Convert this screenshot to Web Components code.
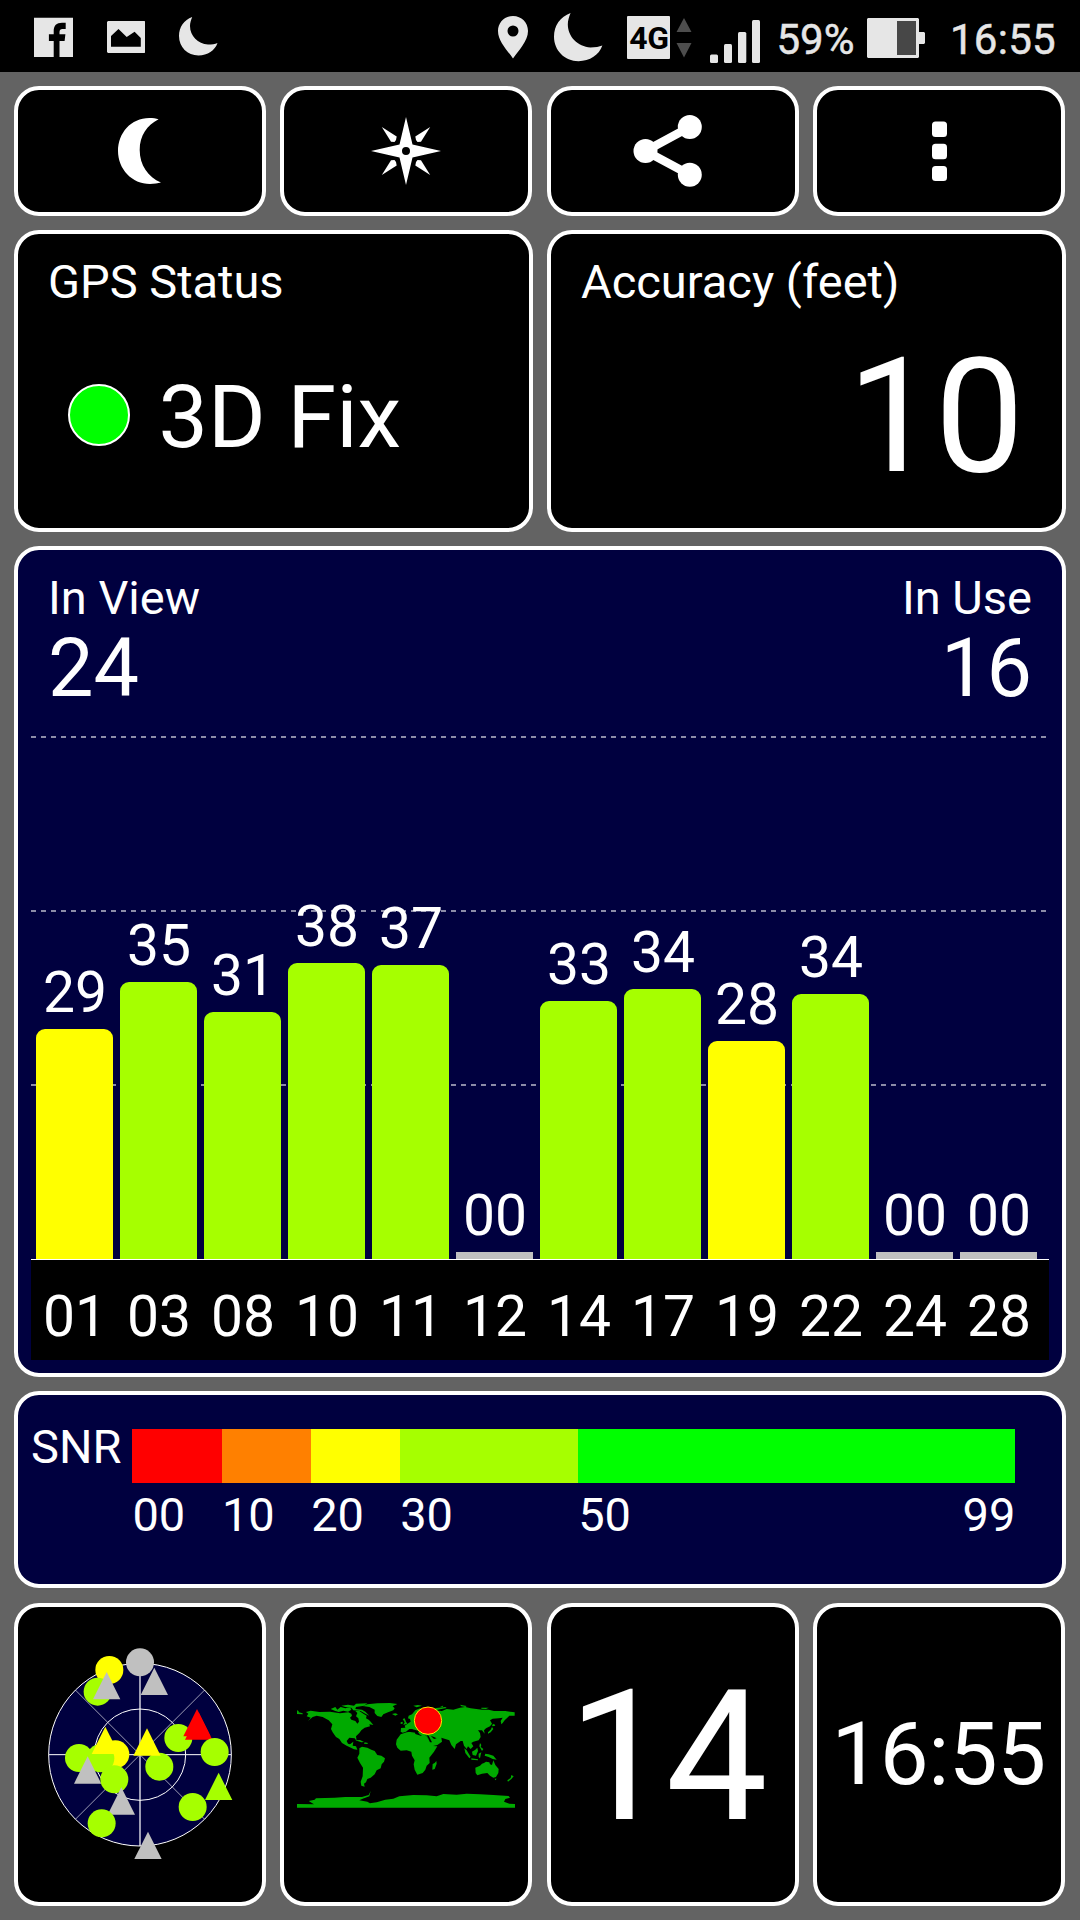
<!DOCTYPE html>
<html lang="en">
<head>
<meta charset="utf-8">
<title>GPS Test</title>
<style>
	body {
		margin: 0;
		background: #636363;
		color: #fff;
		font-family: Roboto, "Liberation Sans", sans-serif;
		line-height: 1;
	}
</style>
</head>
<body>
<gps-app></gps-app>

<script>
const LIME = "#a6ff00";
const GREY = "#c0c0c0";

// every status bar icon is drawn on the full 72px height of the bar
const MOON = "M13.2 17C5 20 0 27 0 36C0 47 8.5 55.5 19.5 55.5C28.5 55.5 36 50.5 38.5 43C36 44 33 44.5 29 44.5C19 44 11 36 11 26C11 23 12 20 13.2 17Z";
const RAY = "M24.2-24L9.3-14.5L10-11L11.5-9L15-9.3Z";

const icons = {
	facebook: [39, 72, `<path fill="#e6e6e6" d="M0 17.7H39V57H25.5V41H30.6L31.4 34.3H25.5V32C25.5 30 26.5 29 28.5 29H31.7V22.7H28C22.5 22.7 19.7 25.5 19.7 31V34.3H14.9V41H19.7V57H0Z"/>`],
	picture: [38, 72, `<path fill="#e6e6e6" fill-rule="evenodd" d="M1 21H37.5L38.5 22V52L37.5 53H1L0 52V22ZM4 36L11.5 29L19.7 37L27.6 31.7L33.8 38V46.7H4Z"/>`],
	moonSmall: [39, 72, `<path fill="#e6e6e6" d="${MOON}"/>`],
	pin: [30, 72, `<path fill="#e6e6e6" fill-rule="evenodd" d="M15 16C6.5 16 0 22.5 0 31C0 41 9 50 15 58.5C21 50 30 41 30 31C30 22.5 23.5 16 15 16ZM15 25.5a5.5 5.5 0 1 1 0 11a5.5 5.5 0 1 1 0-11Z"/>`],
	moonBig: [49, 72, `<path fill="#e6e6e6" transform="translate(0 -8.25) scale(1.256 1.25)" d="${MOON}"/>`],
	arrows: [16, 72, `<path fill="#4d4d4d" d="M8 18L15.5 32H.5ZM8 57.5L.5 43H15.5Z"/>`],
	signal: [50, 72, `<g fill="#e6e6e6"><rect y="54.5" width="8" height="8.5" rx="1.5"/><rect x="14" y="44" width="8" height="19" rx="1.5"/><rect x="28" y="32" width="8.3" height="31" rx="1.5"/><rect x="42" y="20" width="8" height="43" rx="1.5"/></g>`],
	battery: [58, 72, `<path fill="#e6e6e6" d="M1 18H51L52 19V32H57L58 33V43L57 44H52V57L51 58H1L0 57V19Z"/><rect x="30" y="21" width="19" height="34" fill="#474747"/>`],
	night: [46, 66, `<path d="M40.6 1.3C38 .3 35 0 31.3 0C13 0 0 15 0 33C0 51 14 66 32 66C36 66 40 65.5 43 64.6C30 59 21.7 47 21.7 32C21.7 18 29 7 40.6 1.3Z"/>`],
	compass: [70, 68, `<g transform="translate(35 34)">
		<path fill-rule="evenodd" d="M0-34L6.5-6.5L35 0L6.5 6.5L0 34L-6.5 6.5L-35 0L-6.5-6.5ZM0-4a4 4 0 1 0 0 8a4 4 0 1 0 0-8Z"/>
		<path d="${RAY}"/><path transform="scale(-1 1)" d="${RAY}"/><path transform="scale(1 -1)" d="${RAY}"/><path transform="scale(-1)" d="${RAY}"/>
	</g>`],
	share: [80, 74, `<g transform="translate(40 37)"><path d="M16.8-24L-27.5 0L16.8 23.7" fill="none" stroke="#fff" stroke-width="8.5"/><circle cx="-27.5" r="12"/><circle cx="16.8" cy="-24" r="12"/><circle cx="16.8" cy="23.7" r="12"/></g>`],
	more: [15, 60, `<rect y=".5" width="15" height="15.5" rx="3.5"/><rect y="22.8" width="15" height="15.5" rx="3.5"/><rect y="45" width="15" height="15" rx="3.5"/>`]
};

class AppIcon extends HTMLElement {
	connectedCallback() {
		const [w, h, body] = icons[this.getAttribute("name")];
		this.attachShadow({ mode: "open" }).innerHTML = `
			<style>
				:host { display: block; flex: none; }
				svg { display: block; fill: #fff; }
			</style>
			<svg width="${w}" height="${h}" viewBox="0 0 ${w} ${h}">${body}</svg>
		`;
	}
}

class StatusBar extends HTMLElement {
	connectedCallback() {
		this.attachShadow({ mode: "open" }).innerHTML = `
			<style>
				:host {
					display: flex;
					justify-content: space-between;
					box-sizing: border-box;
					height: 72px;
					padding: 0 24px 0 34px;
					background: #000;
					color: #e6e6e6;
					font-size: 42px;
				}
				div { display: flex; }
				.left { gap: 34px; }
				.text { padding-top: 18.6px; -webkit-text-stroke: .5px #e6e6e6; }
				.time { letter-spacing: .3px; }
				.net {
					width: 43px;
					height: 43px;
					margin: 16px 6px 0 24px;
					border-radius: 1px;
					background: #e6e6e6;
					color: #000;
					font-size: 32px;
					font-weight: 700;
					line-height: 44px;
					justify-content: center;
					letter-spacing: -.5px;
				}
			</style>
			<div class="left">
				<app-icon name="facebook"></app-icon>
				<app-icon name="picture"></app-icon>
				<app-icon name="moonSmall"></app-icon>
			</div>
			<div>
				<app-icon name="pin"></app-icon>
				<app-icon name="moonBig" style="margin-left:26px"></app-icon>
				<div class="net">4G</div>
				<app-icon name="arrows"></app-icon>
				<app-icon name="signal" style="margin:0 16px 0 18px"></app-icon>
				<span class="text">59%</span>
				<app-icon name="battery" style="margin:0 24.5px 0 13px"></app-icon>
				<span class="text time">16:55</span>
			</div>
		`;
	}
}

class GpsTile extends HTMLElement {
	connectedCallback() {
		this.attachShadow({ mode: "open" }).innerHTML = `
			<style>
				:host {
					display: block;
					box-sizing: border-box;
					min-width: 0;
					border: 4px solid #fff;
					border-radius: 25px;
					background: #000;
				}
				:host([navy]) { background: #00003f; }
				:host([center]) {
					display: flex;
					align-items: center;
					justify-content: center;
					margin: 0 1px 0 -.4px;
				}
			</style>
			<slot></slot>
		`;
	}
}

class GpsReading extends HTMLElement {
	connectedCallback() {
		this.attachShadow({ mode: "open" }).innerHTML = `
			<style>
				:host { display: block; padding: 23.5px 30px 0; }
				.title { font-size: 47px; }
			</style>
			<div class="title">${this.getAttribute("title-text")}</div>
			<slot></slot>
		`;
	}
}

class FixStatus extends HTMLElement {
	connectedCallback() {
		this.attachShadow({ mode: "open" }).innerHTML = `
			<style>
				:host {
					display: flex;
					align-items: center;
					gap: 28.5px;
					margin: 68.3px 0 0 20px;
					font-size: 88px;
				}
				.led {
					box-sizing: border-box;
					width: 62px;
					height: 62px;
					margin-top: -4px;
					border: 2px solid #fff;
					border-radius: 50%;
					background: #0f0;
				}
			</style>
			<span class="led"></span>
			<span><slot></slot></span>
		`;
	}
}

const satellites = [
	["01", "29", 230, "#ff0"],
	["03", "35", 277, LIME],
	["08", "31", 247, LIME],
	["10", "38", 296, LIME],
	["11", "37", 294, LIME],
	["12", "00", 7, GREY],
	["14", "33", 258, LIME],
	["17", "34", 270, LIME],
	["19", "28", 218, "#ff0"],
	["22", "34", 265, LIME],
	["24", "00", 7, GREY],
	["28", "00", 7, GREY]
];

class SignalChart extends HTMLElement {
	connectedCallback() {
		this.attachShadow({ mode: "open" }).innerHTML = `
			<style>
				:host { display: block; }
				header {
					display: flex;
					justify-content: space-between;
					height: 162.5px;
					padding: 23.5px 30px 0;
					font-size: 47px;
				}
				header div:last-child { text-align: right; }
				b { display: block; margin-top: 7.7px; font-size: 81px; font-weight: 400; }
				.plot {
					display: grid;
					height: 523px;
					margin: 0 13px;
					border-bottom: 1px solid #fff;
				}
				.lines, .bars { grid-area: 1 / 1; min-height: 0; }
				.lines { display: flex; flex-direction: column; gap: 172px; margin-right: 2px; }
				.lines i {
					height: 2px;
					background: repeating-linear-gradient(90deg, #8c8ca8 0 5px, transparent 5px 10px);
				}
				.bars, .axis { display: flex; gap: 7px; padding-left: 5px; }
				.bars { align-items: flex-end; }
				.bars div, .axis span { width: 77px; text-align: center; font-size: 57px; text-indent: 1px; }
				.bars i { display: block; margin-top: 8px; border-radius: 9px 9px 0 0; }
				.bars i.none { border-radius: 0; }
				.axis { height: 72px; margin: 0 13px; padding-top: 28px; background: #000; }
			</style>
			<header>
				<div>In View<b>24</b></div>
				<div>In Use<b>16</b></div>
			</header>
			<div class="plot">
				<div class="lines"><i></i><i></i><i></i></div>
				<div class="bars">
					${satellites.map(([, snr, h, color]) => `<div>${snr}<i class="${h < 10 ? "none" : ""}" style="height:${h}px;background:${color}"></i></div>`).join("")}
				</div>
			</div>
			<div class="axis">${satellites.map(([prn]) => `<span>${prn}</span>`).join("")}</div>
		`;
	}
}

class SnrLegend extends HTMLElement {
	connectedCallback() {
		this.attachShadow({ mode: "open" }).innerHTML = `
			<style>
				:host { display: flex; padding: 27.5px 0 0 13px; font-size: 47px; }
				.name { width: 101.4px; }
				.step { padding-top: 6px; }
				.step i { display: block; height: 54px; margin-bottom: 8.8px; }
				.step div { display: flex; justify-content: space-between; }
			</style>
			<span class="name">SNR</span>
			<div class="step" style="width:89.5px"><i style="background:#f00"></i>00</div>
			<div class="step" style="width:89.3px"><i style="background:#ff8000"></i>10</div>
			<div class="step" style="width:89px"><i style="background:#ff0"></i>20</div>
			<div class="step" style="width:178px"><i style="background:${LIME}"></i>30</div>
			<div class="step" style="width:437.2px"><i style="background:#0f0"></i><div><span>50</span><span>99</span></div></div>
		`;
	}
}

// c = circle (centre), t = triangle (apex), in drawing order
const sky = [
	["c", 238, 120, "#ff0"],
	["c", 203, 185, LIME],
	["c", 330, 97, GREY],
	["t", 230, 126, GREY],
	["t", 373, 113, GREY],
	["c", 445, 324, LIME],
	["t", 501, 237, "#f00"],
	["t", 506, 247, "#f00"],
	["c", 554, 366, LIME],
	["c", 388, 410, LIME],
	["c", 147, 384, LIME],
	["c", 256, 373, "#ff0"],
	["c", 211, 385, LIME],
	["t", 226, 290, "#ff0"],
	["t", 351, 295, "#ff0"],
	["t", 173, 379, GREY],
	["c", 253, 448, LIME],
	["t", 274, 472, GREY],
	["c", 488, 531, LIME],
	["t", 566, 428, LIME],
	["c", 215, 580, LIME],
	["t", 354, 605, GREY]
];

class SkyView extends HTMLElement {
	connectedCallback() {
		const marks = sky.map(([kind, x, y, color]) => kind === "c"
			? `<circle cx="${x}" cy="${y}" r="42" fill="${color}"/>`
			: `<path d="M${x} ${y}l41 82h-82z" fill="${color}"/>`).join("");

		this.attachShadow({ mode: "open" }).innerHTML = `
			<style>
				:host, svg { display: block; }
			</style>
			<svg width="220" height="240" viewBox="0 12 660 720">
				<circle cx="330" cy="374" r="274" fill="#00003f"/>
				<g fill="none" stroke="#9c9cb4" stroke-width="3">
					<path d="M136 180L524 568M524 180L136 568"/>
					<path stroke-width="6" d="M330 100V648"/>
				</g>
				<g fill="none" stroke="#fff" stroke-width="3">
					<circle cx="330" cy="374" r="274"/>
					<circle cx="330" cy="374" r="137"/>
					<path d="M56 374H604"/>
				</g>
				${marks}
			</svg>
		`;
	}
}

class WorldMap extends HTMLElement {
	connectedCallback() {
		this.attachShadow({ mode: "open" }).innerHTML = `
			<style>
				:host, svg { display: block; }
			</style>
			<svg width="220" height="110" viewBox="48 58 660 330">
				<g fill="#0a0">
					<path d="M51 92L56 94V98L68 101V104L51 103Z"/>
					<path d="M78 97L92 93L118 97L150 96L180 101L205 98L214 102L216 108L210 114L214 120L226 124L232 132L237 126L235 116L228 110L232 100L226 94L238 94L250 102L260 108L258 116L266 120L272 126L280 136L268 134L270 140L254 144L244 152L238 160L228 170L230 184L224 176L208 174L200 184L204 192L210 194L220 186L218 198L228 200L232 210L240 212L222 209L200 198L186 190L178 178L168 172L158 158L153 148L157 134L146 122L128 112L110 108L98 112L84 124L92 114L80 110L85 102Z"/>
					<path d="M152 88L166 82L172 90L182 82L196 86L210 82L214 90L204 96L190 93L176 97L164 93ZM184 78L204 75L222 78L228 72L262 71L252 78L228 82L226 88L246 90L256 96L268 108L256 102L242 94L220 92L214 84L196 82Z"/>
					<path d="M248 79L262 74L292 71L330 70L352 73L338 80L344 86L340 92L324 98L310 104L304 112L292 109L284 100L284 90L268 82Z"/>
					<path d="M336 103L346 101L354 104L346 108ZM226 182L240 181L252 187L244 188ZM254 188L264 190L262 193L252 192Z"/>
					<path d="M238 206L246 201L262 204L274 210L284 214L292 226L304 228L315 236L312 246L305 254L302 266L290 272L284 284L272 294L262 298L258 308L252 312L254 321L244 318L242 306L248 290L249 264L240 250L232 234L238 222Z"/>
					<path d="M362 164L380 158L404 155L406 163L422 168L430 164L440 170L448 184L458 199L472 200L462 216L448 234L449 250L440 258L436 270L428 280L412 285L404 270L401 254L404 242L396 228L394 216L380 212L362 213L352 204L348 194L350 180Z"/>
					<path d="M458 253L464 250L469 244L470 252L464 268L457 270ZM368 118L374 116L378 126L382 132L370 136L374 128ZM362 128L368 126L368 132L362 133Z"/>
					<path d="M362 156L363 145L376 144L374 138L386 130L392 126L390 118L384 116L386 108L396 104L406 92L420 86L440 90L486 94L500 88L520 90L540 84L556 82L572 86L606 90L626 90L642 94L676 94L704 98V108L688 108L682 114L674 122L668 130L664 134L662 124L668 114L656 116L638 117L630 122L636 132L630 140L618 146L612 152L614 162L606 152L594 152L600 160L602 172L596 182L580 186L574 190L580 200L572 208L564 200L560 208L552 198L548 184L542 184L528 194L524 208L514 196L508 182L496 178L484 174L486 186L472 196L456 200L446 184L440 168L420 165L414 158L404 156L396 148L388 148L378 156L368 159Z"/>
					<path d="M553 206L560 212L572 232L568 236L556 220ZM576 216L586 210L592 204L594 214L588 228L578 226ZM574 236L594 239V242L574 240ZM596 222L604 218L602 226L600 236L596 232ZM600 190L604 196L602 202L610 208L606 214L598 200ZM616 222L626 224L640 228L650 240L638 238L626 232L614 228ZM624 158L632 150L636 142L640 148L632 158L624 162ZM636 136L642 132L646 138L638 140Z"/>
					<path d="M586 264L600 258L606 252L612 250L618 246L628 248L630 254L636 256L640 242L646 256L656 268L655 280L648 292L640 294L630 288L622 280L606 282L592 287L587 280ZM644 297L650 297L646 302ZM694 286L701 290L694 298L684 306L682 302L692 295Z"/>
					<path d="M400 78L414 76L426 78L410 83ZM462 86L476 84L496 82L500 85L480 89L468 92ZM540 75L560 79L556 82L544 80ZM604 84L626 84L618 88L604 87ZM480 80L490 78L488 82Z"/>
					<path d="M51 373L102 374L86 364L104 360L108 356L164 354L196 352L246 352L266 346L272 334L268 350L248 357L238 362L262 366L270 371L290 368L316 360L340 357L358 350L400 346L440 347L470 350L490 343L530 345L560 342L600 344L640 346L686 349L690 354L676 358L672 366L688 372L705 373V384H51Z"/>
				</g>
				<path fill="#000" d="M386 156L396 158L414 160L416 154L404 150L394 148ZM440 166L446 168L456 188L450 188ZM452 168L462 172L470 176L462 178Z"/>
				<circle cx="444" cy="123" r="41" fill="#f00" stroke="#ffe600" stroke-width="3"/>
			</svg>
		`;
	}
}

class GpsApp extends HTMLElement {
	connectedCallback() {
		this.attachShadow({ mode: "open" }).innerHTML = `
			<style>
				:host { display: block; }
				main {
					display: grid;
					grid-template-columns: repeat(4, 1fr);
					grid-template-rows: 130px 302px 831px 197px 304px;
					gap: 14px;
					padding: 14px;
				}
				.half { grid-column: span 2; }
				.full { grid-column: span 4; }
				.bottom { margin-top: .5px; }
				[name="night"] { padding-left: 2px; }
				[name="share"] { padding-left: 1px; }
				.accuracy { margin: 32px 10px 0 0; font-size: 159px; letter-spacing: -2px; text-align: right; }
				.count { padding: 6px 14px 0 0; font-size: 182px; letter-spacing: -4.5px; }
				.clock { padding: 1px 1px 0 0; font-size: 87px; letter-spacing: -.5px; }
			</style>
			<status-bar></status-bar>
			<main>
				<gps-tile center><app-icon name="night"></app-icon></gps-tile>
				<gps-tile center><app-icon name="compass"></app-icon></gps-tile>
				<gps-tile center><app-icon name="share"></app-icon></gps-tile>
				<gps-tile center><app-icon name="more"></app-icon></gps-tile>

				<gps-tile class="half">
					<gps-reading title-text="GPS Status"><fix-status>3D Fix</fix-status></gps-reading>
				</gps-tile>
				<gps-tile class="half">
					<gps-reading title-text="Accuracy (feet)"><div class="accuracy">10</div></gps-reading>
				</gps-tile>

				<gps-tile class="full" navy><signal-chart></signal-chart></gps-tile>
				<gps-tile class="full" navy><snr-legend></snr-legend></gps-tile>

				<gps-tile class="bottom" center><sky-view></sky-view></gps-tile>
				<gps-tile class="bottom" center><world-map></world-map></gps-tile>
				<gps-tile class="bottom" center><span class="count">14</span></gps-tile>
				<gps-tile class="bottom" center><span class="clock">16:55</span></gps-tile>
			</main>
		`;
	}
}

customElements.define("app-icon", AppIcon);
customElements.define("status-bar", StatusBar);
customElements.define("gps-tile", GpsTile);
customElements.define("gps-reading", GpsReading);
customElements.define("fix-status", FixStatus);
customElements.define("signal-chart", SignalChart);
customElements.define("snr-legend", SnrLegend);
customElements.define("sky-view", SkyView);
customElements.define("world-map", WorldMap);
customElements.define("gps-app", GpsApp);
</script>
</body>
</html>
